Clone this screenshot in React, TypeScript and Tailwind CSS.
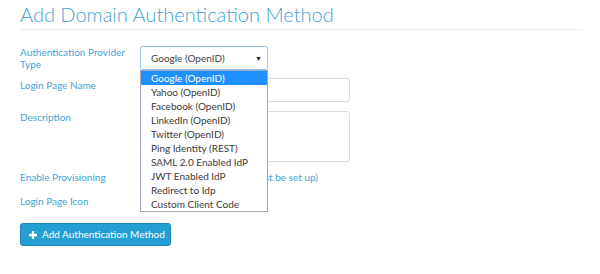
const providers = [
	"Google (OpenID)",
	"Yahoo (OpenID)",
	"Facebook (OpenID)",
	"LinkedIn (OpenID)",
	"Twitter (OpenID)",
	"Ping Identity (REST)",
	"SAML 2.0 Enabled IdP",
	"JWT Enabled IdP",
	"Redirect to Idp",
	"Custom Client Code",
];

function Label({ children }: { children: React.ReactNode }) {
	return (
		<div className="w-[120px] shrink-0 whitespace-nowrap text-[10px] leading-[12px] text-[#43a2d6]">
			{children}
		</div>
	);
}

export default function App() {
	return (
		<div className="w-[600px] h-[274px] bg-white font-['Lato',sans-serif] overflow-hidden">
			<div className="ml-5 w-[562px]">
				<h1 className="pt-[2px] pb-[3px] text-[20px] leading-[24px] font-light text-[#43a2d6] border-b border-[#ececec] whitespace-nowrap">
					Add Domain Authentication Method
				</h1>

				<div className="mt-4 flex flex-col">
					<div className="flex items-start h-[24px]">
						<Label>
							Authentication Provider
							<br />
							Type
						</Label>
						<div className="relative">
							<div className="w-[128px] h-[24px] border border-[#8cc4ee] rounded-[3px] flex items-center justify-between pl-[10px] pr-[5px] text-[10px] text-[#444]">
								<span>Google (OpenID)</span>
								<span className="text-[7px] text-[#222]">▼</span>
							</div>
							<div className="absolute left-0 top-[24px] z-10 w-[128px] bg-white border border-[#a0aab8] text-[10px] leading-[14px] text-[#3a3a3a] whitespace-nowrap">
								{providers.map((p, i) => (
									<div
										key={p}
										className={i === 0 ? "pl-[10px] bg-[#1e90ff] text-white" : "pl-[10px]"}
									>
										{p}
									</div>
								))}
							</div>
						</div>
					</div>

					<div className="mt-2 flex items-start">
						<div className="pt-[1px]">
							<Label>Login Page Name</Label>
						</div>
						<div className="w-[210px] h-[24px] border border-[#dcdcdc] rounded-[3px]" />
					</div>

					<div className="mt-[9px] flex items-start">
						<Label>Description</Label>
						<div className="w-[210px] h-[51px] border border-[#dcdcdc] rounded-[3px]" />
					</div>

					<div className="mt-[9px] flex items-center h-[12px]">
						<Label>Enable Provisioning</Label>
						<div className="w-[178px] flex items-center justify-between whitespace-nowrap text-[10px] leading-[12px] text-[#43a2d6]">
							<input type="checkbox" className="w-3 h-3" />
							<span>(Provisioning profile must be set up)</span>
						</div>
					</div>

					<div className="mt-3 flex items-center h-[12px]">
						<Label>Login Page Icon</Label>
					</div>

					<div className="mt-4">
						<button className="h-[23px] w-[151px] flex items-center gap-[5px] pl-[8px] whitespace-nowrap bg-[#239fd4] border border-[#1b86b8] rounded-[3px] text-white text-[10px]">
							<svg width="8" height="8" viewBox="0 0 9 9">
								<path d="M3.2 0h2.6v3.2H9v2.6H5.8V9H3.2V5.8H0V3.2h3.2z" fill="white" />
							</svg>
							Add Authentication Method
						</button>
					</div>
				</div>
			</div>
		</div>
	);
}
